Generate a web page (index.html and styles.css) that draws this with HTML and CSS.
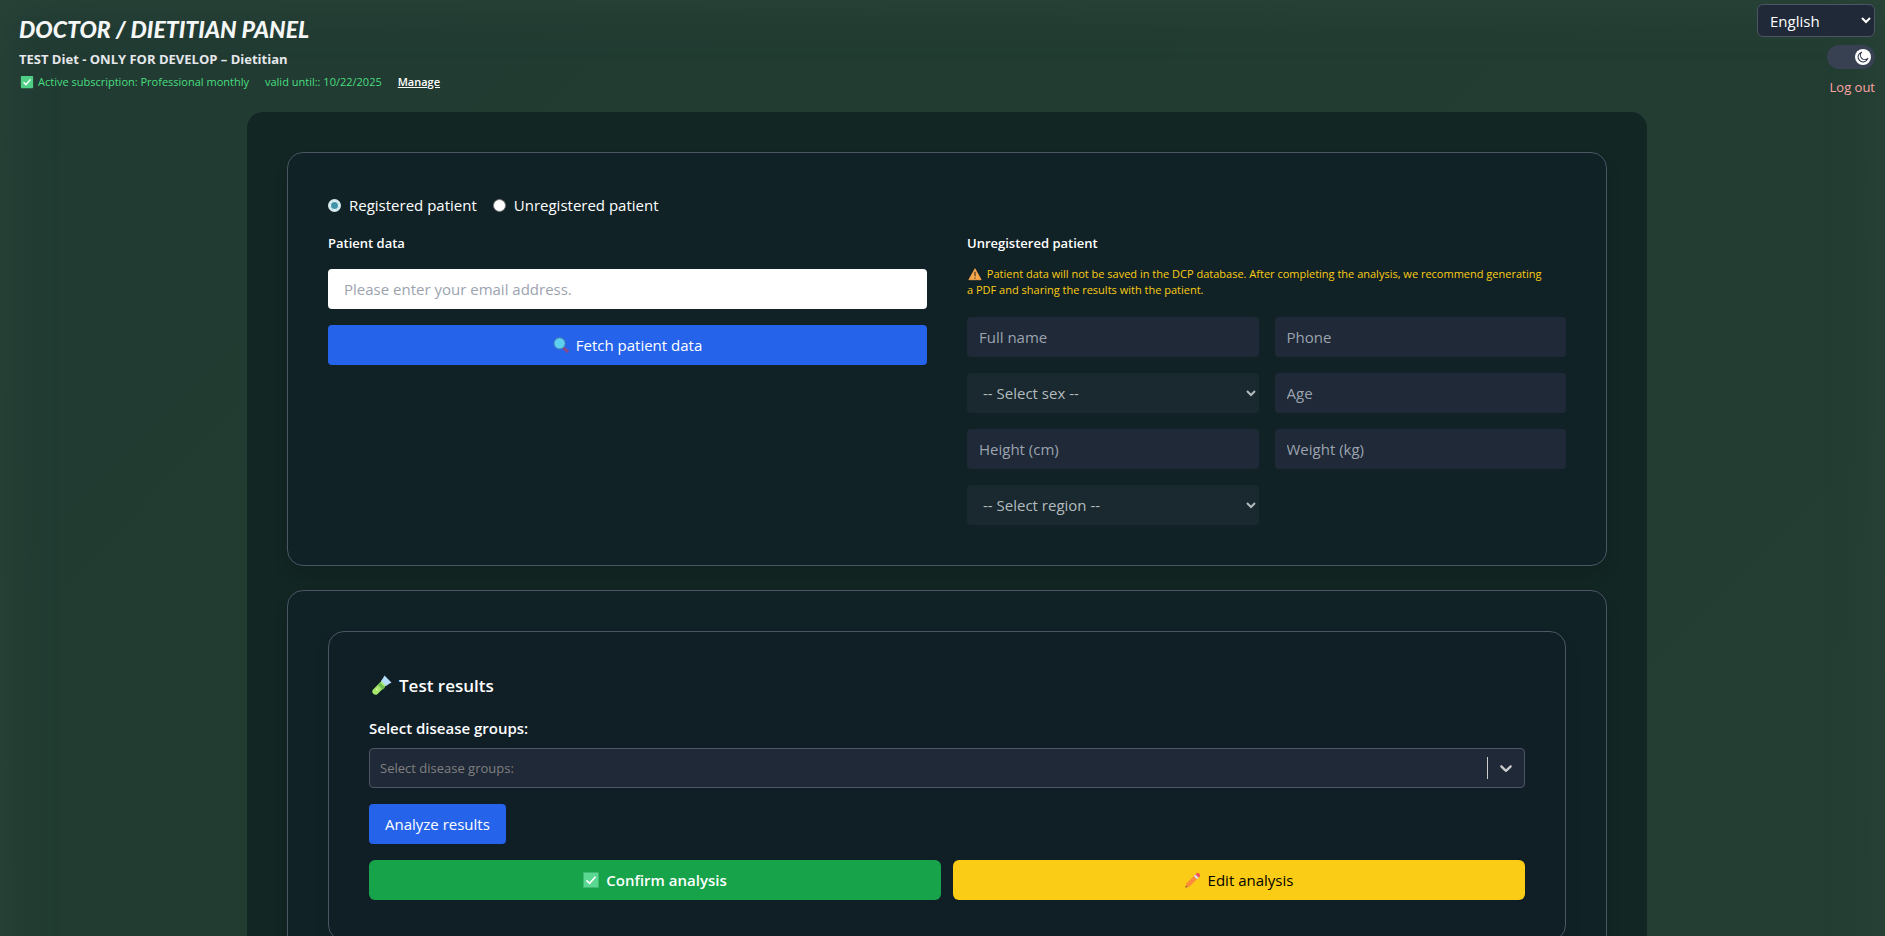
FILE: index.html
```html
<!DOCTYPE html>
<html lang="en">
<head>
<meta charset="utf-8">
<meta name="viewport" content="width=device-width, initial-scale=1">
<title>Doctor / Dietitian Panel</title>
<link rel="stylesheet" href="styles.css">
</head>
<body>
<header class="topbar">
  <div class="brand">
    <h1 class="brand-title">DOCTOR / DIETITIAN PANEL</h1>
    <p class="brand-name">TEST Diet - ONLY FOR DEVELOP – Dietitian</p>
    <div class="subscription">
      <span class="with-icon"><svg class="icon-sm" viewBox="0 0 16 16" aria-hidden="true"><rect x="1" y="1" width="14" height="14" rx="1" fill="#4fcf85"/><path d="M4 8.4 6.8 11 12 5" fill="none" stroke="#fff" stroke-width="1.6"/></svg>Active subscription: Professional monthly</span>
      <span>valid until:: 10/22/2025</span>
      <a class="manage" href="#manage">Manage</a>
    </div>
  </div>
  <div class="tools">
    <select class="language" aria-label="Language"><option>English</option><option>Polski</option></select>
    <button class="theme-toggle" type="button" aria-label="Toggle dark theme"><span class="knob"><svg viewBox="0 0 16 16" width="12" height="12" aria-hidden="true"><path d="M6.2 1.6a6.6 6.6 0 1 0 8.2 8.2A5.8 5.8 0 0 1 6.2 1.6z" fill="none" stroke="#2b3444" stroke-width="1.4" stroke-linejoin="round"/></svg></span></button>
    <a class="logout" href="#logout">Log out</a>
  </div>
</header>
<main class="panel">
  <section class="card">
    <div class="modes">
      <label class="mode"><input class="radio" type="radio" name="mode" checked>Registered patient</label>
      <label class="mode"><input class="radio" type="radio" name="mode">Unregistered patient</label>
    </div>
    <div class="columns">
      <div class="stack">
        <h2 class="section-title">Patient data</h2>
        <input class="email" type="email" placeholder="Please enter your email address." aria-label="Email address">
        <button class="btn btn-blue" type="button"><svg class="icon" viewBox="0 0 16 16" aria-hidden="true"><path d="m10.8 11 3.4 3.2" stroke="#8b4a85" stroke-width="3" stroke-linecap="round"/><circle cx="6.6" cy="6.4" r="5.6" fill="#5cd0ee" stroke="#4a7fb0" stroke-width="1"/></svg>Fetch patient data</button>
      </div>
      <div>
        <h2 class="section-title">Unregistered patient</h2>
        <p class="warning"><svg class="icon-sm icon-inline" viewBox="0 0 16 16" aria-hidden="true"><path d="M8 2 15 14.5H1z" fill="#f9a84a" stroke="#f9a84a" stroke-linejoin="round"/><path d="M8 5.5v5M8 12v1.5" stroke="#4a3a2a" stroke-width="1.4"/></svg> Patient data will not be saved in the DCP database. After completing the analysis, we recommend generating a&nbsp;PDF and sharing the results with the patient.</p>
        <div class="fields">
          <input class="field" type="text" placeholder="Full name" aria-label="Full name">
          <input class="field" type="tel" placeholder="Phone" aria-label="Phone">
          <select class="field field-select" aria-label="Sex"><option>-- Select sex --</option></select>
          <input class="field" type="text" placeholder="Age" aria-label="Age">
          <input class="field" type="text" placeholder="Height (cm)" aria-label="Height (cm)">
          <input class="field" type="text" placeholder="Weight (kg)" aria-label="Weight (kg)">
          <select class="field field-select" aria-label="Region"><option>-- Select region --</option></select>
        </div>
      </div>
    </div>
  </section>
  <section class="card">
    <div class="card card-inner">
      <h2 class="results-title"><svg class="icon-lg" viewBox="0 0 24 24" aria-hidden="true"><path d="M14 5.5 18.5 10 8.6 19.9a3.2 3.2 0 0 1-4.5-4.5z" fill="#a5e86a"/><path d="m11 8.5 5 5-2.2 2.2-5-5z" fill="#6dbb54"/><path d="m15.5 1.5 7 7-2.6 1.4L17 12l-5-5 1.8-2.6z" fill="#b5dcf8"/><circle cx="8" cy="15.5" r="1" fill="#e2ffb5"/></svg>Test results</h2>
      <label class="group-label" for="groups">Select disease groups:</label>
      <div class="combo">
        <input class="combo-input" id="groups" type="text" placeholder="Select disease groups:">
        <span class="combo-divider"></span>
        <button class="combo-button" type="button" aria-label="Open disease groups"><svg width="20" height="20" viewBox="0 0 20 20" aria-hidden="true"><path d="M4.516 7.548c0.436-0.446 1.043-0.481 1.576 0l3.908 3.747 3.908-3.747c0.533-0.481 1.141-0.446 1.574 0 0.436 0.445 0.408 1.197 0 1.615-0.406 0.418-4.695 4.502-4.695 4.502-0.217 0.223-0.502 0.335-0.787 0.335s-0.57-0.112-0.789-0.335c0 0-4.287-4.084-4.695-4.502s-0.436-1.17 0-1.615z" fill="#ccc"/></svg></button>
      </div>
      <button class="btn btn-blue btn-analyze" type="button">Analyze results</button>
      <div class="actions">
        <button class="btn btn-green" type="button"><svg class="icon" viewBox="0 0 16 16" aria-hidden="true"><rect width="16" height="16" rx="1" fill="#3fb873"/><rect x="1" y="1" width="14" height="14" fill="#5ad790"/><path d="M3.5 8.4 6.6 11.4 12.5 4.8" fill="none" stroke="#fff" stroke-width="1.6"/></svg>Confirm analysis</button>
        <button class="btn btn-yellow" type="button"><svg class="icon" viewBox="0 0 16 16" aria-hidden="true"><path d="M10.2 2.6 13.4 5.8 4.6 14.6.5 15.5 1.4 11.4z" fill="#fb8b3c"/><path d="m8.8 4 3.2 3.2 1.6-1.6-3.2-3.2z" fill="#d8e2f0"/><path d="m10.4 2.4 1.2-1.2q1.2-1 2.4.2l.6.6q1.2 1.2.2 2.4l-1.2 1.2z" fill="#f4525c"/><path d="m.5 15.5.4-1.8 1.4 1.4z" fill="#4a3a4a"/></svg>Edit analysis</button>
      </div>
    </div>
  </section>
</main>
</body>
</html>
```
FILE: styles.css
```css
* { box-sizing: border-box; }
html { scrollbar-width: none; background: #233c32; }
body {
  margin: 0;
  min-height: 100vh;
  padding: 4px 10px 24px 19px;
  font-family: "Open Sans", "Noto Sans", sans-serif;
  font-size: 15px;
  line-height: 24px;
  color: #fff;
  background: linear-gradient(135deg, #213b33, #223c31 40%, #253e34);
  box-shadow: inset 0 0 50px #2c463a;
}
h1, h2, p { margin: 0; }
input, select, button { font: inherit; color: inherit; margin: 0; }
button { cursor: pointer; border: 0; }
svg { flex: none; }

.topbar { display: flex; justify-content: space-between; height: 108px; }
.brand { padding-top: 9px; }
.brand-title { font: italic 900 23px/32px Lato, sans-serif; color: #f5f7f6; }
.brand-name { margin-top: 4px; font-size: 13px; font-weight: 700; line-height: 20px; color: #e5e7eb; }
.subscription { display: flex; gap: 16px; margin-top: 5px; font-size: 11px; line-height: 16px; color: #4ade80; }
.with-icon { display: flex; align-items: center; gap: 4px; padding-left: 1px; }
.icon-sm { width: 14px; height: 14px; }
.icon { width: 16px; height: 16px; }
.icon-lg { width: 24px; height: 24px; }
.icon-inline { vertical-align: -3px; margin: 0 2px 0 1px; }
.manage { color: #fff; font-weight: 600; }
.tools { display: flex; flex-direction: column; align-items: flex-end; gap: 8px; }
.language { width: 118px; height: 33px; padding: 4px 8px; color: #fff; background: #1f2937; border: 1px solid #4b5563; border-radius: 6px; }
.theme-toggle { display: flex; justify-content: flex-end; align-items: center; width: 48px; height: 24px; padding: 4px; border-radius: 12px; background: #374151; }
.knob { display: grid; place-items: center; width: 16px; height: 16px; border-radius: 50%; background: #fff; }
.logout { font-size: 13px; line-height: 20px; color: #fca5a5; text-decoration: none; }

.panel { display: grid; gap: 24px; max-width: 1400px; margin: 0 auto; padding: 40px; border-radius: 16px; background: #122624; }
.card { padding: 40px; border: 1px solid #4b5563; border-radius: 16px; background: #112226; box-shadow: 0 10px 15px rgba(0, 0, 0, .1); }
.card-inner { background: #101e26; }
.modes { display: flex; gap: 16px; margin-bottom: 16px; }
.mode { display: flex; align-items: center; gap: 8px; }
.radio { appearance: none; width: 13px; height: 13px; border: 1px solid #767676; border-radius: 50%; background: #fff; }
.radio:checked { border: 2px solid #3f94a8; background: #3f94a8; box-shadow: inset 0 0 0 1px #fff; border-color: #d5edf2; }
.columns { display: grid; grid-template-columns: 1fr 1fr; gap: 40px; }
.stack { display: grid; gap: 16px; align-content: start; }
.section-title { font-size: 13px; line-height: 20px; font-weight: 600; }
.email { height: 40px; padding: 0 16px; border: 0; border-radius: 4px; background: #fff; color: #111827; }
.email::placeholder, .field::placeholder { color: #9ca3af; opacity: 1; }
.warning { margin: 13px 0 19px; font-size: 11px; line-height: 16px; color: #facc15; }
.fields { display: grid; grid-template-columns: 1fr 1fr; gap: 16px; }
.field { width: 100%; min-width: 0; height: 40px; padding: 0 12px; border: 0; border-radius: 4px; background: #1f2937; }
.field-select { color: #b3bbbd; background: #1a282f; }
.btn { display: flex; align-items: center; justify-content: center; gap: 7px; height: 40px; padding: 0 16px; border-radius: 4px; }
.btn-blue { background: #2563eb; }
.btn-analyze { margin: 16px 0; }
.results-title { display: flex; align-items: center; gap: 6px; font-size: 17px; line-height: 28px; font-weight: 600; }
.group-label { display: block; margin: 16px 0 8px; font-weight: 600; }
.combo { display: flex; align-items: center; height: 40px; border: 1px solid #4b5563; border-radius: 4px; background: #1f2937; }
.combo-input { flex: 1; min-width: 0; height: 100%; padding: 0 10px; border: 0; background: none; font-size: 13px; }
.combo-input::placeholder { color: #808080; opacity: 1; }
.combo-divider { width: 1px; height: 22px; background: #ccc; }
.combo-button { display: grid; place-items: center; width: 36px; height: 36px; padding: 0; background: none; }
.actions { display: grid; grid-template-columns: 1fr 1fr; gap: 12px; }
.actions .btn { border-radius: 6px; }
.btn-green { background: #16a34a; font-weight: 600; }
.btn-yellow { background: #facc15; color: #000; }
```
